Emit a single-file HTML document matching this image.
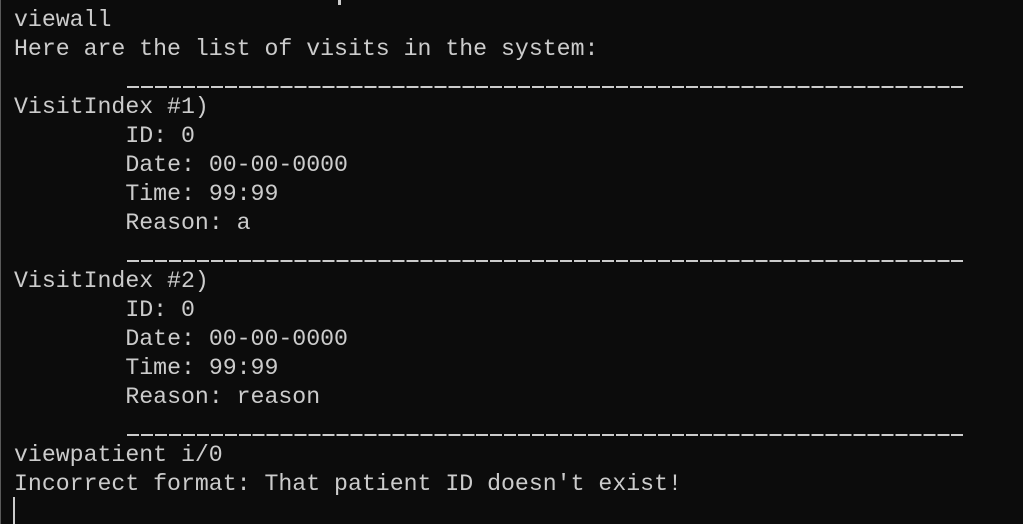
<!DOCTYPE html>
<html><head><style>
html,body{margin:0;padding:0;background:#0c0c0c;width:1023px;height:524px;overflow:hidden}
#b{position:absolute;left:0;top:0;width:1px;height:524px;background:#5a5a5a}
pre{position:absolute;left:14px;top:6px;margin:0;font-family:"Liberation Mono",monospace;font-size:23.2px;line-height:29px;color:#cccccc;tab-size:8;white-space:pre}
#c{position:absolute;left:13px;top:497px;width:2px;height:27px;background:#cccccc}
#p{position:absolute;left:338px;top:0;width:3px;height:5px;background:#cccccc}
.d{position:absolute;left:127px;width:838px;height:2px;background:repeating-linear-gradient(to right,#cccccc 0 12px,transparent 12px 13.97px)}
</style></head><body>
<div id="b"></div><div id="p"></div>
<pre>viewall
Here are the list of visits in the system:

VisitIndex #1)
	ID: 0
	Date: 00-00-0000
	Time: 99:99
	Reason: a

VisitIndex #2)
	ID: 0
	Date: 00-00-0000
	Time: 99:99
	Reason: reason

viewpatient i/0
Incorrect format: That patient ID doesn't exist!</pre>
<div class="d" style="top:86px"></div>
<div class="d" style="top:260px"></div>
<div class="d" style="top:434px"></div>
<div id="c"></div>
</body></html>
